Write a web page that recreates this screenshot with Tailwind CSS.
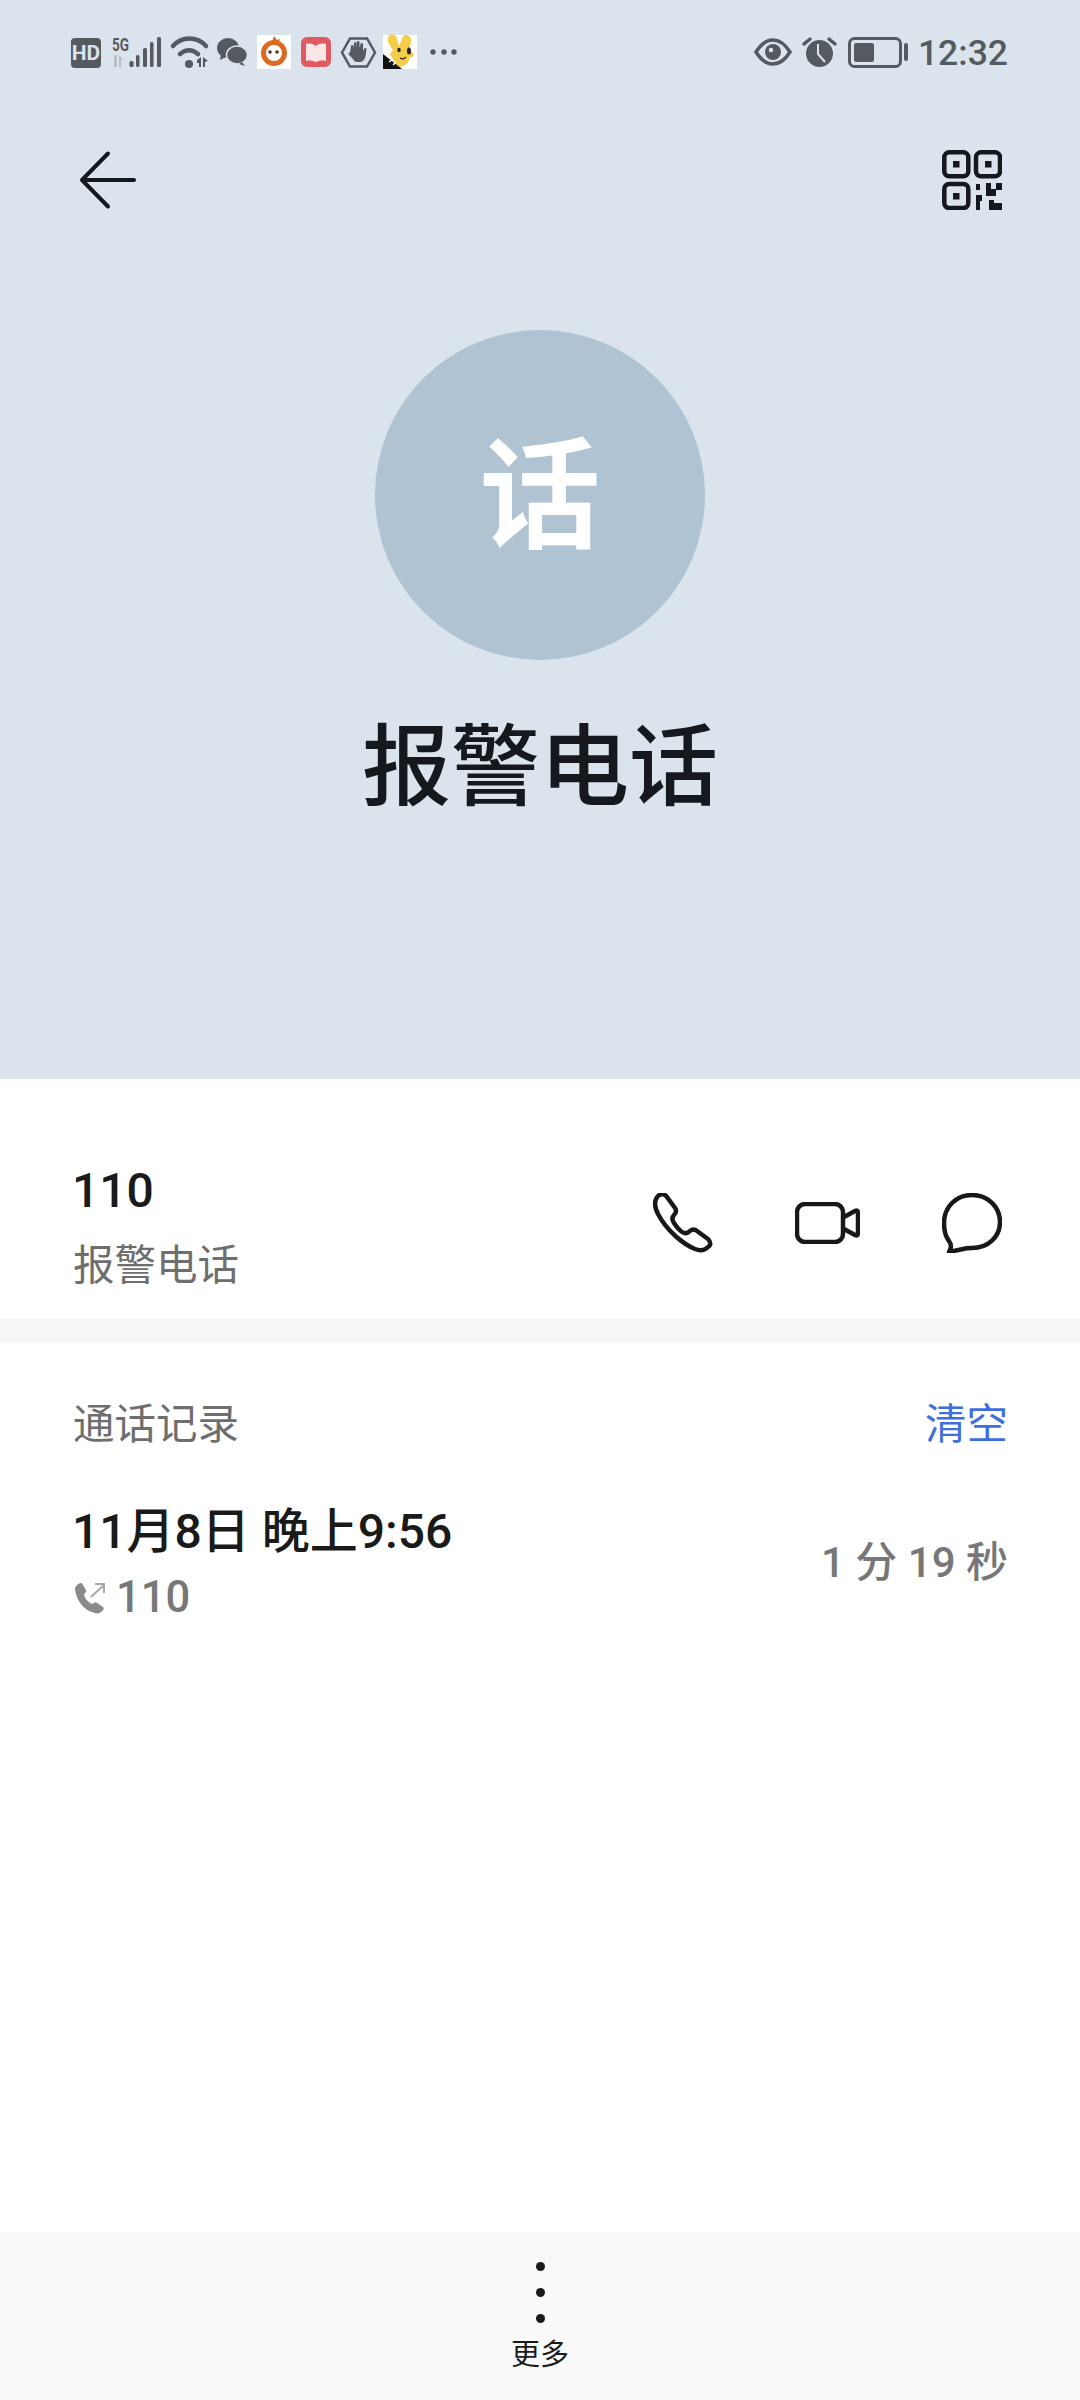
<!doctype html>
<html lang="zh">
<head>
<meta charset="utf-8">
<script src="https://cdn.jsdelivr.net/npm/@tailwindcss/browser@4"></script>
</head>
<body class="bg-white font-['Roboto','Noto_Sans_CJK_SC',sans-serif]">
<div class="flex flex-col w-[1080px] h-[2400px] overflow-hidden">
  <!-- header -->
  <header class="h-[1079px] bg-[#dbe3ec] flex flex-col items-center shrink-0">
    <div class="w-full h-[124px] pl-[70px] pr-[72px] pt-[28px] flex justify-between items-start text-[#555a61]">
      <svg class="w-[400px] h-[48px]" viewBox="70 28 400 48">
        <rect x="71" y="38" width="30" height="30" rx="4" fill="#555a61"/>
        <text x="86" y="60" text-anchor="middle" font-size="21" font-weight="700" fill="#dbe3ec" font-family="Roboto">HD</text>
        <text x="112" y="51" font-size="18" font-weight="700" fill="#555a61" font-family="Roboto" textLength="17" lengthAdjust="spacingAndGlyphs">5G</text>
        <path d="M114 55h3v12h-3zM119 55l4 5h-2v7h-2z" fill="#b9bec5"/>
        <rect x="129.500" y="61" width="4" height="6" rx="1.500" fill="#555a61"/><rect x="136" y="55" width="3.500" height="12" rx="1.500" fill="#555a61"/><rect x="143" y="48" width="4" height="19" rx="1.500" fill="#555a61"/><rect x="150" y="42" width="3.500" height="25" rx="1.500" fill="#555a61"/><rect x="157" y="37" width="4" height="30" rx="1.500" fill="#555a61"/>
        <g fill="none" stroke="#555a61" stroke-width="4.500" stroke-linecap="round"><path d="M173 46c9-10 24-10 33 0"/><path d="M180 54c6-5 12-5 18 0"/></g>
        <circle cx="189" cy="64" r="4" fill="#555a61"/>
        <path d="M197 60l4-3v10h-2v-4h-2zM203 57l5 4-3 1v5h-2z" fill="#555a61"/>
        <ellipse cx="228" cy="48" rx="11" ry="10" fill="#555a61"/><path d="M221 54l-1 6 6-3z" fill="#555a61"/>
        <ellipse cx="237" cy="55" rx="10.500" ry="9" fill="#555a61" stroke="#dbe3ec" stroke-width="1.500"/><path d="M242 62l3 4-6-2z" fill="#555a61"/>
        <rect x="257" y="35" width="34" height="34" fill="#fff"/>
        <circle cx="274" cy="53" r="10.500" fill="#fff" stroke="#dd6a22" stroke-width="5"/><path d="M272 42l2-6 3 4 3-1-2 6z" fill="#dd6a22"/><circle cx="270" cy="52" r="1.800" fill="#5a3320"/><circle cx="277" cy="52" r="1.800" fill="#5a3320"/>
        <rect x="301" y="37" width="30" height="30" rx="6" fill="#df5a61"/><path d="M306 44c4-1 7 0 10 2 2-2 5-3 10-2v17c-5-1-8 0-10 1-3-1-6-2-10-1z" fill="#fbe6e6"/>
        <path d="M342 52.500l8-14h17l8 14-8 14h-17z" fill="none" stroke="#555a61" stroke-width="2.500"/><path d="M350 53l1-7a1.300 1.300 0 012.500 0l.5 3v-6a1.300 1.300 0 012.500 0v5l.5-6a1.300 1.300 0 012.500 0v6l1-4a1.300 1.300 0 012.500 0v7l1-2a1.300 1.300 0 012.500 0l-1 7c-1 4-3 6-6 6h-2c-3 0-4-2-5.500-4l-3-3c-1-2 0-3 1-2z" fill="#555a61"/>
        <rect x="383" y="35" width="34" height="34" fill="#fff"/>
        <path d="M388 38c1-5 8-5 9 1l2 7 3-7c1-6 9-5 9 1 0 4-1 7-2 10l3 2c3 2 2 6-2 5-1 6-5 9-10 10h-3l-7-13 3-4c-3-4-6-8-5-12z" fill="#f5cd4a"/>
        <path d="M383 54l19 15h-19z" fill="#111"/>
        <path d="M389 62l4-3M393 65l3-3" stroke="#fff" stroke-width="1.500"/>
        <ellipse cx="399" cy="50" rx="1.700" ry="2.300" fill="#222"/><ellipse cx="409" cy="51" rx="2" ry="3.500" fill="#222"/><path d="M400 58q4 2 6-1" stroke="#222" stroke-width="1.300" fill="none"/>
        <circle cx="433" cy="52" r="2.700" fill="#555a61"/><circle cx="444" cy="52" r="2.700" fill="#555a61"/><circle cx="454" cy="52" r="2.700" fill="#555a61"/>
      </svg>
      <div class="flex items-center h-[48px]">
        <svg class="w-[160px] h-[48px]" viewBox="755 28 160 48">
          <path d="M758 52c5-8 10-12 17-12s12 4 17 12c-5 8-10 12-17 12s-12-4-17-12z" fill="none" stroke="#555a61" stroke-width="3.500"/><circle cx="775" cy="52" r="8" fill="#555a61"/><circle cx="773" cy="50" r="2.200" fill="#dbe3ec"/>
          <circle cx="821.500" cy="53.500" r="13.500" fill="#555a61"/><path d="M820 44v10l7 8" fill="none" stroke="#dbe3ec" stroke-width="2"/><path d="M806 44l6-5M837 44l-6-5" stroke="#555a61" stroke-width="3.500" stroke-linecap="round"/>
          <rect x="851.500" y="38.500" width="51" height="28" rx="5" fill="none" stroke="#555a61" stroke-width="3"/><rect x="856" y="43" width="20" height="19" rx="2" fill="#555a61"/><rect x="906" y="43" width="4" height="18" rx="2" fill="#555a61"/>
        </svg>
        <span class="text-[35.500px] leading-[48px] font-medium ml-[5px] mt-[2px]">12:32</span>
      </div>
    </div>
    <div class="w-full h-[112px] pl-[80px] pr-[78px] flex justify-between items-center">
      <svg class="w-[56px] h-[56px] overflow-visible" viewBox="0 0 56 56"><path d="M28 1.500L2 28l26 26.500M2 28h52" fill="none" stroke="#15181d" stroke-width="4" stroke-linecap="round" stroke-linejoin="round"/></svg>
      <svg class="w-[60px] h-[60px]" viewBox="0 0 60 60" fill="#15181d">
        <g fill="none" stroke="#15181d" stroke-width="4.500"><rect x="2.300" y="2.300" width="24" height="24" rx="5"/><rect x="34" y="2.300" width="24" height="24" rx="5"/><rect x="2.300" y="34" width="24" height="24" rx="5"/></g>
        <rect x="11" y="11" width="6.500" height="6.500"/><rect x="43" y="11" width="6.500" height="6.500"/><rect x="11" y="43" width="6.500" height="6.500"/>
        <path d="M34 34h4v6h-4zM44 33h5v6h5v7h-10zM54 33h6v7h-6zM34 45h6v6h-2v9h-4zM47 50h5v3h8v7H47z"/>
      </svg>
    </div>
    <div class="w-[330px] h-[330px] rounded-full bg-[#b0c3d3] flex items-center justify-center mt-[94px] text-white text-[120px] font-medium leading-none pt-[6px] [-webkit-text-stroke:2px_white]">话</div>
    <h1 class="mt-[62px] text-[89px] leading-[92px] font-medium text-[#15181d]">报警电话</h1>
  </header>

  <!-- contact -->
  <section class="h-[240px] shrink-0 pl-[72px] pr-[78px] flex items-start justify-between">
    <div class="pt-[84px]">
      <div class="text-[48px] leading-[56px] font-medium text-[#1a1a1a]">110</div>
      <div class="text-[41.500px] leading-[52px] mt-[21px] ml-[1px] text-[#6e6e6e]">报警电话</div>
    </div>
    <div class="flex items-center pt-[114px] gap-[82px]">
      <svg class="w-[60px] h-[60px]" viewBox="0 0 60 60"><path d="M5 3C8 0 12 1 14 4L22 15C24 18 23 20 21 22C19 24 19 27 21 30C23 33 26 37 29 39C32 41 35 40 37 38C39 36 42 36 44 38L55 46C58 49 58 52 55 54C51 58 47 58 42 56C30 51 14 38 5 21C1 13 1 7 5 3Z" fill="none" stroke="#181818" stroke-width="4.500" stroke-linejoin="round"/></svg>
      <svg class="w-[65px] h-[42px]" viewBox="0 0 65 42"><rect x="2" y="2" width="46" height="38" rx="8" fill="none" stroke="#181818" stroke-width="4.500"/><path d="M49 15l11-6c2-1 3 0 3 2v20c0 2-1 3-3 2l-11-6" fill="none" stroke="#181818" stroke-width="4.500" stroke-linejoin="round"/></svg>
      <svg class="w-[60px] h-[60px]" viewBox="0 0 60 60"><path d="M7 48C3 43 2 37 2 30 2 14 14 2 30 2s28 12 28 27-12 26-28 26c-3 0-6 0-9 1L7 59c2-3 3-7 0-11z" fill="none" stroke="#181818" stroke-width="4.500" stroke-linejoin="round"/></svg>
    </div>
  </section>
  <div class="h-[24px] bg-[#f7f7f7] shrink-0"></div>

  <!-- history -->
  <section class="flex-1 pl-[72px] pr-[72px]">
    <div class="flex justify-between items-center pt-[54px] h-[109px] text-[41.500px] leading-[52px]">
      <span class="text-[#6e6e6e] ml-[1px]">通话记录</span><span class="text-[#3f6fdc]">清空</span>
    </div>
    <div class="flex justify-between items-center mt-[52px]">
      <div>
        <div class="text-[48px] leading-[56px] font-medium text-[#1a1a1a]">11月8日 晚上9:56</div>
        <div class="flex items-center mt-[12px] gap-[10px] pl-[2px]">
          <svg class="w-[32px] h-[32px]" viewBox="0 0 32 32"><path d="M1 7c0-3 3-5 5-6 1 0 2 0 3 2l3 5c.500 1 0 2-1 3l-1 2c1 4 4 7 8 9l2-1c1-1 2-1 3 0l6 4c1 1 1 2 0 3-2 3-5 4-8 3C10 29 2 18 1 7z" fill="#8a8a8a"/><path d="M17 15L30 3M21 2h9v9" fill="none" stroke="#a8a8a8" stroke-width="2"/></svg>
          <span class="text-[43.500px] leading-[52px] font-medium text-[#777]">110</span>
        </div>
      </div>
      <span class="text-[42px] leading-[52px] font-medium text-[#777] mb-[2px]">1 分 19 秒</span>
    </div>
  </section>

  <!-- bottom -->
  <footer class="h-[168px] shrink-0 bg-[#f9f9f9] flex flex-col items-center pt-[30px]">
    <div class="flex flex-col gap-[17px]"><i class="w-[9px] h-[9px] rounded-full bg-[#1a1a1a]"></i><i class="w-[9px] h-[9px] rounded-full bg-[#1a1a1a]"></i><i class="w-[9px] h-[9px] rounded-full bg-[#1a1a1a]"></i></div>
    <span class="text-[29px] leading-[38px] mt-[13px] text-[#1a1a1a]">更多</span>
  </footer>
</div>
</body>
</html>
